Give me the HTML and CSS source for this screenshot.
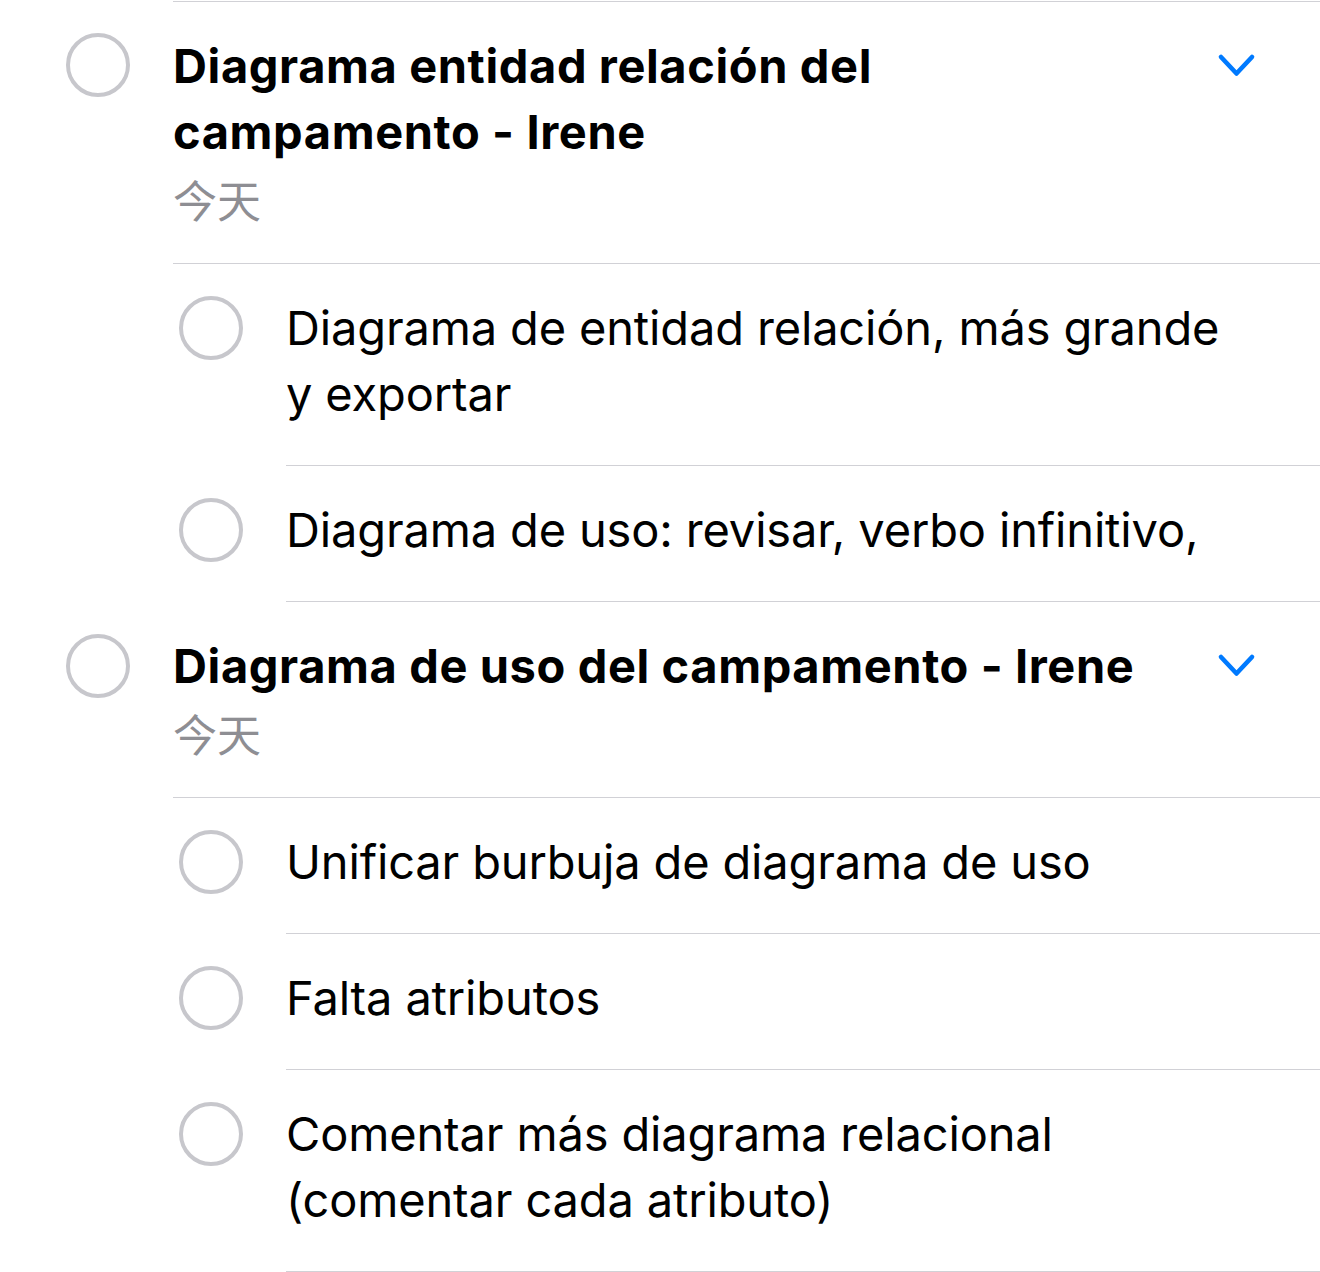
FILE: index.html
```html
<!DOCTYPE html>
<html lang="es">
<head>
<meta charset="utf-8">
<title>Recordatorios</title>
<link rel="stylesheet" href="styles.css">
</head>
<body>
<div class="list">
  <div class="row parent first">
    <span class="check"></span>
    <div class="content">
      <div class="text">
        <div class="title">Diagrama entidad relación del campamento - Irene</div>
        <div class="date">今天</div>
      </div>
      <svg class="chev" viewBox="0 0 40 26" width="40" height="26"><path d="M5 4 L20.5 20.5 L36 4" fill="none" stroke="#007aff" stroke-width="4.6" stroke-linecap="round" stroke-linejoin="round"/></svg>
    </div>
  </div>
  <div class="row sub">
    <span class="check"></span>
    <div class="content"><div class="text"><div class="label">Diagrama de entidad relación, más grande y exportar</div></div></div>
  </div>
  <div class="row sub">
    <span class="check"></span>
    <div class="content"><div class="text"><div class="label">Diagrama de uso: revisar, verbo infinitivo,</div></div></div>
  </div>
  <div class="row parent">
    <span class="check"></span>
    <div class="content">
      <div class="text">
        <div class="title">Diagrama de uso del campamento - Irene</div>
        <div class="date">今天</div>
      </div>
      <svg class="chev" viewBox="0 0 40 26" width="40" height="26"><path d="M5 4 L20.5 20.5 L36 4" fill="none" stroke="#007aff" stroke-width="4.6" stroke-linecap="round" stroke-linejoin="round"/></svg>
    </div>
  </div>
  <div class="row sub">
    <span class="check"></span>
    <div class="content"><div class="text"><div class="label">Unificar burbuja de diagrama de uso</div></div></div>
  </div>
  <div class="row sub">
    <span class="check"></span>
    <div class="content"><div class="text"><div class="label">Falta atributos</div></div></div>
  </div>
  <div class="row sub">
    <span class="check"></span>
    <div class="content"><div class="text"><div class="label">Comentar más diagrama relacional (comentar cada atributo)</div></div></div>
  </div>
</div>
</body>
</html>
```

FILE: styles.css
```css
html, body {
  margin: 0;
  padding: 0;
  background: #ffffff;
}
body {
  font-family: Inter, "Noto Sans", "Noto Sans CJK SC", sans-serif;
  color: #000;
  -webkit-font-smoothing: antialiased;
}
.list {
  padding-top: 1px;
}
.row {
  display: flex;
  align-items: flex-start;
}
.row.parent {
  padding-left: 66px;
}
.row.sub {
  padding-left: 179px;
}
.check {
  flex: none;
  box-sizing: border-box;
  width: 64px;
  height: 64px;
  border: 4px solid #c7c7cc;
  border-radius: 50%;
  margin-top: 32px;
  margin-right: 43px;
}
.row.sub .check {
  margin-right: 43px;
}
.content {
  flex: 1;
  display: flex;
  align-items: flex-start;
  border-bottom: 1px solid #d1d1d6;
  min-width: 0;
}
.row.first .content {
  border-top: 1px solid #d1d1d6;
}
.text {
  flex: 1;
  min-width: 0;
  padding: 31px 0 38px 0;
}
.row.sub .text {
  padding-right: 80px;
}
.row.parent .text {
  padding-right: 60px;
  padding-bottom: 30px;
}
.title {
  font-size: 47px;
  font-weight: 700;
  line-height: 66px;
  letter-spacing: 0.6px;
}
.label {
  font-size: 47px;
  font-weight: 400;
  line-height: 66px;
  letter-spacing: -0.15px;
}
.date {
  font-family: "Noto Sans CJK SC", sans-serif;
  font-size: 44px;
  line-height: 68px;
  color: #8e8e93;
}
.chev {
  flex: none;
  margin-top: 51px;
  margin-right: 64px;
}
```
